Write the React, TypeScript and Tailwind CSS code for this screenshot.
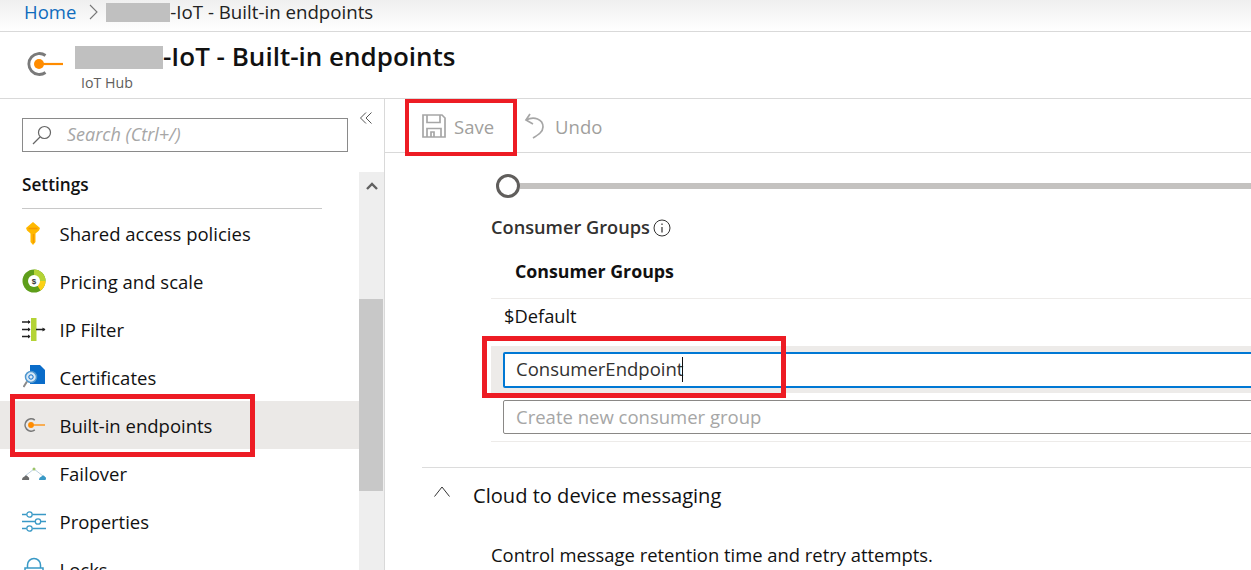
import type { ReactNode } from "react";

function EndpointIcon({ size }: { size: number }) {
  return (
    <svg width={size} height={(size * 24) / 36} viewBox="0 0 36 24" fill="none">
      <path d="M18.500 3.500A10.500 10.500 0 1 0 18.500 20.500" stroke="#7a7a7a" strokeWidth="2.800" />
      <circle cx="12" cy="12" r="5" fill="#ff8c00" />
      <path d="M12 12H36" stroke="#ff8c00" strokeWidth="2.200" />
    </svg>
  );
}

function KeyIcon() {
  return (
    <svg className="-ml-[3px]" width="16" height="23" viewBox="0 0 16 23">
      <path d="M8 0l7 6-1 2.500-3.500 3V20L8 23l-2.500-3v-8.500L2 8.500 1 6z" fill="#ffb900" />
      <path d="M3.500 6.500h9" stroke="#f59a00" strokeWidth="1.600" />
      <path d="M8.500 12v9" stroke="#f59a00" strokeWidth="1.500" />
    </svg>
  );
}

function PricingIcon() {
  return (
    <svg width="24" height="24" viewBox="0 0 24 24">
      <circle cx="12" cy="12" r="11.500" fill="#5e9e1a" />
      <path d="M12 .5A11.500 11.500 0 0 1 23.500 12H17A5 5 0 0 0 12 7z" fill="#b4d335" />
      <path d="M23.500 12A11.500 11.500 0 0 1 18.500 21.500L15 16A5 5 0 0 0 17 12z" fill="#fcd116" />
      <circle cx="12" cy="12" r="6" fill="#fff" />
      <text x="12" y="15" textAnchor="middle" fontSize="8" fontWeight="700" fill="#333" fontFamily="Liberation Sans, sans-serif">$</text>
    </svg>
  );
}

function FilterIcon() {
  return (
    <svg width="24" height="24" viewBox="0 0 24 24" fill="none">
      <rect x="9" y="1" width="5.500" height="23" fill="#b4d335" />
      <path d="M0 5h8M0 12.500h8M0 19.500h8M14 12.500h9" stroke="#222" strokeWidth="1.300" />
      <path d="M6 3l2.500 2L6 7zM6 10.500l2.500 2-2.500 2zM6 17.500l2.500 2-2.500 2zM20.500 10.500l3 2-3 2z" fill="#222" />
    </svg>
  );
}

function CertIcon() {
  return (
    <svg width="22" height="24" viewBox="0 0 22 24" fill="none">
      <path d="M7 0h10l5 5v14H7z" fill="#0a6cc9" />
      <circle cx="8" cy="12" r="5.500" fill="#dbeaf6" stroke="#4f97cf" strokeWidth="1.500" />
      <circle cx="8" cy="12" r="2.200" stroke="#0a6cc9" strokeWidth="1" />
      <path d="M4 16.500L.5 22" stroke="#8a8a8a" strokeWidth="2" />
    </svg>
  );
}

function FailoverIcon() {
  return (
    <svg width="24" height="13" viewBox="0 0 24 13" fill="none">
      <path d="M3 9L12 2L21 9" stroke="#bcd0de" strokeWidth="1" />
      <circle cx="12" cy="2" r="1.500" fill="#9cc46a" />
      <path d="M0 13c0-2.500 1.500-3 2.500-3.500 1-1.500 3-1 3.500 .5 1 0 1.500 1 1 3z" fill="#6b6b6b" />
      <path d="M17 13c0-2.500 1.500-3 2.500-3.500 1-1.500 3-1 3.500 .5 1 0 1.500 1 .500 3z" fill="#3999c6" />
    </svg>
  );
}

function PropertiesIcon() {
  return (
    <svg width="24" height="21" viewBox="0 0 24 21" fill="none" stroke="#3999c6" strokeWidth="1.300">
      <path d="M0 3.500h4.500M10.500 3.500h13.500M0 10.500h13M19 10.500h5M0 17.500h4.500M10.500 17.500h13.500" />
      <circle cx="7.500" cy="3.500" r="2.700" />
      <circle cx="16" cy="10.500" r="2.700" />
      <circle cx="7.500" cy="17.500" r="2.700" />
    </svg>
  );
}

function LockIcon() {
  return (
    <svg width="20" height="24" viewBox="0 0 20 24" fill="none" stroke="#3999c6" strokeWidth="1.500">
      <path d="M3.500 11V8a6.500 6.500 0 0 1 13 0v3" />
      <rect x="1" y="11" width="18" height="12" />
    </svg>
  );
}

function MenuRow({ icon, label, active }: { icon: ReactNode; label: string; active?: boolean }) {
  return (
    <div className={`flex h-12 shrink-0 items-center ${active ? "bg-[#ebe9e7]" : ""}`}>
      <div className="ml-[22px] flex w-6 items-center justify-center">{icon}</div>
      <span className="ml-[13.500px] pt-[2px] text-[18.500px] text-[#111]">{label}</span>
    </div>
  );
}

function Sidebar() {
  return (
    <aside className="relative flex w-[385px] shrink-0 flex-col overflow-hidden border-r border-[#d9d9d9]">
      <div className="flex h-[73px] shrink-0 items-start pl-[22px] pt-[19px]">
        <div className="flex h-[34px] w-[326px] items-center border border-[#8a8a8a] pl-2">
          <svg width="22" height="22" viewBox="0 0 22 22" fill="none" stroke="#666" strokeWidth="1.200">
            <circle cx="13.500" cy="8.500" r="6" />
            <path d="M9 13L2 20" />
          </svg>
          <input
            className="ml-[14px] min-w-0 flex-1 bg-transparent pb-[2px] text-[18px] italic outline-none placeholder:text-[#a6a6a6]"
            placeholder="Search (Ctrl+/)"
          />
        </div>
        <svg className="ml-[12px] mt-[-6px]" width="12" height="12" viewBox="0 0 12 12" fill="none" stroke="#555" strokeWidth="1">
          <path d="M6 .5L.5 6 6 11.500M11.500 .5L6 6l5.500 5.500" />
        </svg>
      </div>
      <div className="flex min-h-0 flex-1">
        <div className="flex min-w-0 flex-1 flex-col">
          <div className="mx-[22px] flex h-[37px] w-[300px] shrink-0 items-end border-b border-[#c8c8c8] pb-[11px] text-[17.200px] leading-6 font-semibold text-[#111]">
            Settings
          </div>
          <MenuRow icon={<KeyIcon />} label="Shared access policies" />
          <MenuRow icon={<PricingIcon />} label="Pricing and scale" />
          <MenuRow icon={<FilterIcon />} label="IP Filter" />
          <MenuRow icon={<CertIcon />} label="Certificates" />
          <MenuRow icon={<EndpointIcon size={21} />} label="Built-in endpoints" active />
          <MenuRow icon={<FailoverIcon />} label="Failover" />
          <MenuRow icon={<PropertiesIcon />} label="Properties" />
          <MenuRow icon={<LockIcon />} label="Locks" />
        </div>
        <div className="flex w-[25px] shrink-0 flex-col bg-[#eeeeee]">
          <div className="flex h-[127px] justify-center pt-[10px]">
            <svg width="12" height="8" viewBox="0 0 12 8" fill="none" stroke="#606060" strokeWidth="2.400">
              <path d="M1 7l5-5 5 5" />
            </svg>
          </div>
          <div className="mr-[1px] h-[192px] bg-[#c8c8c8]" />
        </div>
      </div>
    </aside>
  );
}

function Toolbar() {
  return (
    <div className="flex h-[54px] shrink-0 items-center border-b border-[#d9d9d9] pl-[37px] text-[18.500px] text-[#a19f9d]">
      <svg width="24" height="24" viewBox="0 0 24 24" fill="none" stroke="#a6a6a6" strokeWidth="1.700">
        <path d="M1 1h19l3 3v19H1z" />
        <path d="M5 1v7.500h13V1M5 23v-8.500h14V23M9 23v-5h3v5" />
      </svg>
      <span className="ml-[8px] pt-[2px]">Save</span>
      <svg className="ml-[30px]" width="21" height="26" viewBox="0 0 21 26" fill="none" stroke="#a6a6a6" strokeWidth="1.700">
        <path d="M6 1L2 7l7 4" />
        <path d="M2 7C10 3 19 6 19 14c0 5-5 8-10 11" />
      </svg>
      <span className="ml-[10px] pt-[2px]">Undo</span>
    </div>
  );
}

function ConsumerGroups() {
  return (
    <div className="pl-[106px]">
      <div className="ml-[5px] flex h-[24px] items-center">
        <div className="size-[24px] shrink-0 rounded-full border-[3.500px] border-[#605e5c] bg-white" />
        <div className="h-[6px] flex-1 bg-[#c4c2c0]" />
      </div>
      <div className="mt-[18px] flex h-6 items-center text-[18.200px] font-semibold text-[#323130]">
        Consumer Groups
        <svg className="ml-[3px]" width="18" height="18" viewBox="0 0 18 18" fill="none" stroke="#323130">
          <circle cx="9" cy="9" r="8" />
          <path d="M9 8v5.500M9 4.500v1.500" strokeWidth="1.200" />
        </svg>
      </div>
      <div className="mt-[5px] flex h-[54px] items-center border-b border-[#edebe9] pl-[24px] text-[17.800px] font-bold text-[#111]">
        Consumer Groups
      </div>
      <div className="flex h-[47px] items-center pb-[14px] pl-[13px] text-[18.300px] text-[#111]">$Default</div>
      <div className="flex h-[47px] items-center bg-[#edebe9] pl-[12px]">
        <div className="-mr-1 flex h-[36px] flex-1 items-center rounded-[2px] border-2 border-[#0078d4] bg-white pb-[2px] pl-[11px] text-[18.500px] text-[#323130]">
          ConsumerEndpoint
          <span className="-ml-[1px] mt-[2px] h-[25px] w-[1px] bg-[#111]" />
        </div>
      </div>
      <div className="flex h-[49px] items-start border-b border-[#edebe9] pl-[12px] pt-[7px]">
        <input
          className="-mr-1 h-[34px] min-w-0 flex-1 rounded-[2px] border border-[#8a8886] bg-white pb-[2px] pl-[12px] text-[18.500px] outline-none placeholder:text-[#a6a6a6]"
          placeholder="Create new consumer group"
        />
      </div>
    </div>
  );
}

export default function App() {
  return (
    <div className="relative flex h-[570px] w-[1251px] flex-col overflow-hidden bg-white font-['Open_Sans',sans-serif]">
      <div className="flex h-[32px] shrink-0 items-center border-b border-[#d9d9d9] bg-gradient-to-b from-[#efefef] to-white pb-[7px] pl-[24px] text-[18.500px]">
        <span className="text-[#0f6cbd]">Home</span>
        <svg className="ml-[13px]" width="9" height="16" viewBox="0 0 9 16" fill="none" stroke="#777" strokeWidth="1.100">
          <path d="M1 1l7 7-7 7" />
        </svg>
        <div className="ml-[8px] h-[19px] w-[64px] bg-[#c0c0c0]" />
        <span className="text-[18.700px] text-[#222]">-IoT - Built-in endpoints</span>
      </div>

      <header className="flex h-[67px] shrink-0 items-start border-b border-[#d9d9d9] pl-[27px]">
        <div className="mt-[20px] w-[36px]">
          <EndpointIcon size={36} />
        </div>
        <div className="ml-[12px] mt-[12px]">
          <div className="flex h-[26px] items-center">
            <div className="h-[23px] w-[88px] bg-[#c0c0c0]" />
            <h1 className="pb-[3px] text-[26px] leading-[26px] font-semibold text-[#111]">-IoT - Built-in endpoints</h1>
          </div>
          <div className="ml-[6px] mt-[3px] text-[14.200px] leading-5 text-[#605e5c]">IoT Hub</div>
        </div>
      </header>

      <div className="flex min-h-0 flex-1">
        <Sidebar />
        <main className="min-w-0 flex-1">
          <Toolbar />
          <div className="pt-[21px]">
            <ConsumerGroups />
            <div className="ml-[37px] mt-[25px] flex h-[57px] items-center border-t border-[#dcdcdc] pl-[12px]">
              <svg className="mb-[9px]" width="16" height="11" viewBox="0 0 16 11" fill="none" stroke="#333" strokeWidth="1">
                <path d="M.5 10.500L8 1l7.500 9.500" />
              </svg>
              <span className="ml-[23px] text-[20.100px] text-[#111]">Cloud to device messaging</span>
            </div>
            <p className="ml-[106px] mt-[17px] text-[18.400px] text-[#111]">Control message retention time and retry attempts.</p>
          </div>
        </main>
      </div>

      {/* Red annotation boxes drawn over the screenshot */}
      <div className="absolute left-[405px] top-[99px] h-[57px] w-[112px] border-4 border-[#ed1c24]" />
      <div className="absolute left-[10px] top-[394px] h-[63px] w-[245px] border-[5px] border-[#ed1c24]" />
      <div className="absolute left-[482px] top-[336px] h-[62px] w-[304px] border-[5px] border-[#ed1c24]" />
    </div>
  );
}
